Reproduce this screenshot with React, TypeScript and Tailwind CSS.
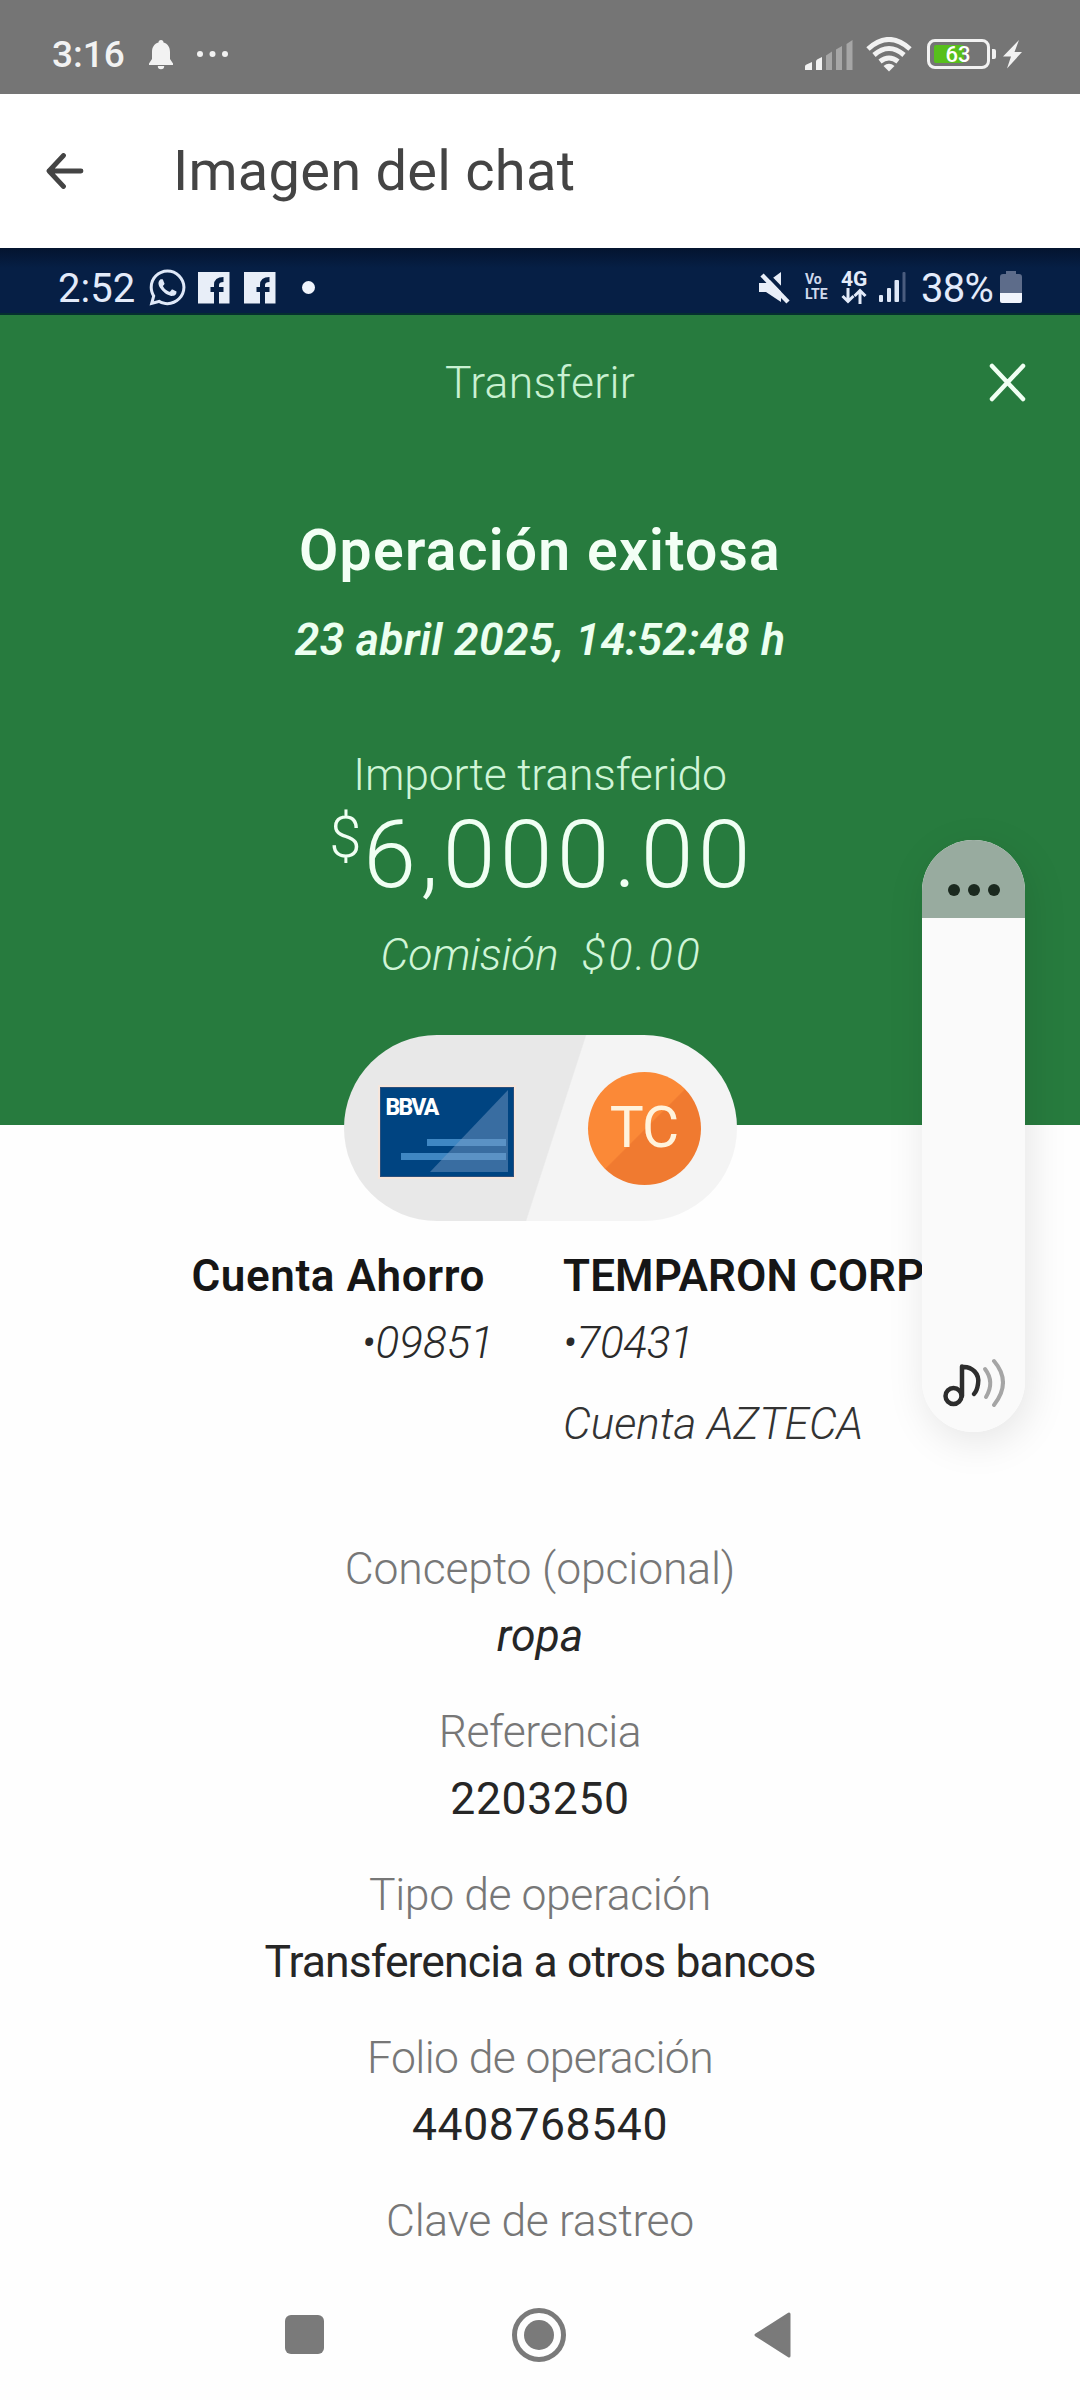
import React from "react";
import { FaWhatsapp } from "react-icons/fa";

const details = [
  { label: "Concepto (opcional)", value: "ropa", labelClass: "tracking-[-0.150px]", valueClass: "italic" },
  { label: "Referencia", value: "2203250", labelClass: "tracking-[-0.500px]", valueClass: "tracking-[0.600px]" },
  { label: "Tipo de operación", value: "Transferencia a otros bancos", labelClass: "tracking-[-0.400px]", valueClass: "tracking-[-0.900px]" },
  { label: "Folio de operación", value: "4408768540", labelClass: "tracking-[-0.600px]", valueClass: "tracking-[0.600px]" },
  { label: "Clave de rastreo", value: "", labelClass: "tracking-[-0.350px]", valueClass: "" },
];

const StatusBar = () => (
  <div className="h-[94px] bg-[#757575] flex items-start text-[#f2f2f2]">
    <span className="ml-[52px] mt-[34px] w-[75px] text-[37px] leading-[42px] font-medium">3:16</span>
    <svg className="ml-[21px] mt-[40px]" width="26" height="30" viewBox="0 0 26 30" fill="#f2f2f2">
      <path d="M13 0c1.600 0 2.500 1.100 2.500 2.600 4.300 1.200 6.500 4.700 6.500 9.400v7l3 4.500V25H1v-1.500L4 19v-7c0-4.700 2.200-8.200 6.500-9.400C10.500 1.100 11.400 0 13 0z" />
      <path d="M9.800 26h6.400a3.200 3.200 0 0 1-6.400 0z" />
    </svg>
    <svg className="ml-[23px] mt-[50px]" width="32" height="8" fill="#f2f2f2">
      <circle cx="3" cy="4" r="3" />
      <circle cx="15.500" cy="4" r="3" />
      <circle cx="28" cy="4" r="3" />
    </svg>
    <svg className="ml-[576px] mt-[40px]" width="49" height="32" fill="#f2f2f2">
      <path d="M0 26.500 Q0 25 1.500 24.500 L7 22 V30 H0z" />
      <path d="M11 21.500 Q11 20 12.500 19.300 L17 17 V30 H11z" />
      <g fill="#a6a6a6">
        <path d="M21 15.500 L27 11.500 V30 H21z" />
        <path d="M31 9.500 L37 6 V30 H31z" />
        <path d="M41.500 4 L47.500 0 V30 H41.500z" />
      </g>
    </svg>
    <svg className="ml-[12px] mt-[37px]" width="46" height="36" fill="none" stroke="#f2f2f2" strokeWidth="5">
      <path d="M2 12 Q23 -7 44 12" />
      <path d="M8 18 Q23 5 38 18" />
      <path d="M14 24.500 Q23 17.500 32 24.500" />
      <path d="M17.500 29 Q23 24.500 28.500 29 L23 34.500z" fill="#f2f2f2" stroke="none" />
    </svg>
    <div className="ml-[15px] mt-[39px] w-[63px] h-[30px] rounded-[8px] border-3 border-[#f2f2f2] relative">
      <div className="ml-[4px] mt-[3px] w-[30px] h-[18px] rounded-[2px] bg-[#57bf1c]" />
      <span className="absolute left-0 top-0 w-[56px] text-center text-[22px] leading-[26px] font-medium text-white">63</span>
    </div>
    <div className="ml-[2px] mt-[49px] w-[4px] h-[10px] rounded-r-[2px] bg-[#f2f2f2]" />
    <svg className="ml-[7px] mt-[40px]" width="19" height="29" fill="#f2f2f2">
      <path d="M16 0 L0 16.500 H8 L4 28.500 L19 12 H11.500z" />
    </svg>
  </div>
);

const AppBar = () => (
  <div className="h-[154px] bg-white flex items-center">
    <svg className="ml-[46px]" width="38" height="36" fill="none" stroke="#444" strokeWidth="4.800" strokeLinecap="round" strokeLinejoin="round">
      <path d="M17.500 2.500 L3 18 L17.500 33.500 M3 18 H35" />
    </svg>
    <h1 className="ml-[89px] text-[56px] leading-[64px] tracking-[0.250px] text-[#444]">Imagen del chat</h1>
  </div>
);

const FacebookIcon = () => (
  <svg width="32" height="32" fill="none">
    <rect width="31.500" height="31.500" fill="#e8eef8" />
    <path d="M18.500 32 V13 Q18.500 7.500 25.500 7.500 M12.500 17.500 H25.500" stroke="#061f45" strokeWidth="5" />
  </svg>
);

const InnerStatusBar = () => (
  <div className="h-[67px] border-b-2 border-[#04302f] bg-[#061f45] bg-[linear-gradient(#04142f,#061f45_20px)] flex items-start text-[#e3ebfa]">
    <span className="ml-[58px] mt-[18px] w-[78px] text-[40px] leading-[46px]">2:52</span>
    <FaWhatsapp className="ml-[11px] mt-[19px]" size={41} color="#dfe8f8" />
    <div className="ml-[10px] mt-[24px] flex gap-[14px]">
      <FacebookIcon />
      <FacebookIcon />
    </div>
    <div className="ml-[26px] mt-[33px] size-[13px] rounded-full bg-[#f0f4fc]" />
    <svg className="ml-[444px] mt-[24px]" width="32" height="32">
      <path d="M0 11 H7 L22 0 V30 L7 20 H0z" fill="#e8eef8" />
      <path d="M3 -3 L33 28" stroke="#061f45" strokeWidth="4" />
      <path d="M3 3 L29 30" stroke="#e8eef8" strokeWidth="4.500" />
    </svg>
    <div className="ml-[14px] mt-[24px] w-[28px] text-[14px] leading-[15px] font-bold text-[#cfd9ec]">
      <p>Vo</p>
      <p>LTE</p>
    </div>
    <div className="ml-[8px] mt-[22px] w-[28px]">
      <p className="text-[21px] leading-[18px] font-bold">4G</p>
      <svg width="26" height="16" fill="none" stroke="#e3ebfa" strokeWidth="3">
        <path d="M7 0 V13 M1.500 8 L7 13.500 L12.500 8 M19 16 V3 M13.500 8 L19 2.500 L24.500 8" />
      </svg>
    </div>
    <svg className="ml-[10px] mt-[24px]" width="28" height="31" fill="#dfe8f8">
      <rect x="0" y="23" width="4" height="7" rx="1" />
      <rect x="8" y="16" width="4" height="14" rx="1" />
      <rect x="15.500" y="8" width="4.500" height="22" rx="1" />
      <rect x="23.500" y="0" width="3" height="30" rx="1" fill="#4a5c7e" />
    </svg>
    <span className="ml-[14px] mt-[18px] w-[74px] text-[40px] leading-[46px] tracking-[-0.700px]">38%</span>
    <svg className="ml-[5px] mt-[23px]" width="22" height="33">
      <path d="M6 0 H16 V3 H19 Q22 3 22 6 V22 H0 V6 Q0 3 3 3 H6z" fill="#5d6c8a" />
      <path d="M0 22 H22 V30 Q22 32 20 32 H2 Q0 32 0 30z" fill="#f0f4fc" />
    </svg>
  </div>
);

const Summary = () => (
  <div className="h-[810px] bg-[#277b3e] flex flex-col items-center text-[44.500px] leading-[60px] whitespace-nowrap">
    <div className="w-full pt-[38px] grid grid-cols-[1fr_auto_1fr]">
      <span className="col-start-2 font-[360] tracking-[0.300px] text-[#c9f1d2]">Transferir</span>
      <svg className="justify-self-end mr-[54px] mt-[10px]" width="37" height="40" stroke="#f0fff3" strokeWidth="4.500" strokeLinecap="round">
        <path d="M3 3 L34 36 M34 3 L3 36" />
      </svg>
    </div>
    <h2 className="mt-[103px] text-[57px] leading-[70px] font-semibold tracking-[1.300px] text-[#f3fff5]">Operación exitosa</h2>
    <p className="mt-[24px] font-semibold italic tracking-[0.300px] text-[#ecfff0]">23 abril 2025, 14:52:48 h</p>
    <p className="mt-[75px] font-[360] tracking-[-0.150px] text-[#d0f5d8]">Importe transferido</p>
    <p className="mt-[5px] flex text-[95px] leading-[90px] font-[330] text-[#f0fff3]">
      <span className="mr-[2px] text-[58px] leading-[54px]">$</span>
      <span className="-mr-[4px] tracking-[4.300px]">6,000.00</span>
    </p>
    <p className="mt-[25px] flex gap-[23px] font-[360] italic text-[#d0f5d8]">
      <span className="tracking-[-0.200px]">Comisión</span>
      <span className="-mr-[3px] tracking-[3px]">$0.00</span>
    </p>
  </div>
);

const AccountsPill = () => (
  <div className="-mt-[90px] mx-auto w-[393px] h-[186px] rounded-full bg-[linear-gradient(107.900deg,#e8e8e8_53.300%,#f4f4f4_53.600%)] flex items-center">
    <div className="ml-[36px] mt-[7px] w-[134px] h-[90px] border border-[#2b4f7c] bg-[#004481] outline-2 outline-[#f6e6dc] relative overflow-hidden">
      <span className="absolute left-[5px] top-[8px] text-[23px] leading-[24px] font-extrabold tracking-[-1.800px] text-white">BBVA</span>
      <svg className="absolute left-0 top-0" width="132" height="88">
        <rect x="46" y="51" width="79" height="7" fill="#3f87c3" />
        <rect x="20" y="65" width="105" height="7" fill="#3f87c3" />
        <path d="M127 2 V84 H49z" fill="#7fa0c8" fillOpacity="0.450" />
      </svg>
    </div>
    <div className="ml-[74px] size-[113px] rounded-full bg-[linear-gradient(135deg,#fb8937_50%,#f07a30_51%)] flex items-center justify-center">
      <span className="text-[57px] leading-[60px] font-[370] tracking-[-1px] text-[#fff3dc]">TC</span>
    </div>
  </div>
);

const Accounts = () => (
  <div className="mt-[25px] flex text-[44px] leading-[60px] whitespace-nowrap">
    <div className="w-[494px] text-right">
      <p className="mr-[9px] font-semibold tracking-[0.600px] text-[#161616]">Cuenta Ahorro</p>
      <p className="mt-[7px] font-[350] italic text-[#2a2a2a]">•09851</p>
    </div>
    <div className="ml-[69px]">
      <p className="font-semibold tracking-[0.100px] text-[#161616]">TEMPARON CORP</p>
      <p className="mt-[7px] font-[350] italic tracking-[-0.300px] text-[#2a2a2a]">•70431</p>
      <p className="mt-[21px] font-[350] italic text-[#333]">Cuenta AZTECA</p>
    </div>
  </div>
);

const Details = () => (
  <div className="mt-[85px] h-[731px] overflow-hidden flex flex-col gap-[36px] text-center text-[44.500px] leading-[60px]">
    {details.map((item) => (
      <div key={item.label} className="shrink-0">
        <p className={`font-[360] text-[#777] ${item.labelClass}`}>{item.label}</p>
        <p className={`mt-[7px] font-[380] text-[#262626] ${item.valueClass}`}>{item.value}</p>
      </div>
    ))}
  </div>
);

const VolumePanel = () => (
  <div className="absolute left-[922px] top-[840px] w-[103px] h-[592px] rounded-[51px] overflow-hidden bg-[#fafafa] flex flex-col justify-between">
    <div className="h-[78px] bg-[#98ab9f] flex items-start justify-center gap-[8px] pt-[44px]">
      <div className="size-[12px] rounded-full bg-[#1c2a20]" />
      <div className="size-[12px] rounded-full bg-[#1c2a20]" />
      <div className="size-[12px] rounded-full bg-[#1c2a20]" />
    </div>
    <svg className="ml-[21px] mb-[22px]" width="64" height="54" fill="none" strokeLinecap="round">
      <g stroke="#2d2d2d" strokeWidth="4.500">
        <ellipse cx="10.500" cy="40" rx="8" ry="8" />
        <path d="M19 40 V10.500 M19 11 C29 10 37 18 35 28 Q34 35 31 38" />
      </g>
      <g stroke="#a5a5a5" strokeWidth="4">
        <path d="M42 13 Q52 26 43 41" />
        <path d="M51 5 Q69 26 51 49" />
      </g>
    </svg>
  </div>
);

const NavBar = () => (
  <div className="h-[130px] bg-[#fefefe] flex items-start">
    <div className="ml-[285px] mt-[45px] size-[39px] rounded-[6px] bg-[#7a7a7a]" />
    <div className="ml-[188px] mt-[38px] size-[54px] rounded-full border-[5px] border-[#7a7a7a] flex items-center justify-center">
      <div className="size-[30px] rounded-full bg-[#7a7a7a]" />
    </div>
    <svg className="ml-[188px] mt-[42px]" width="38" height="46">
      <path d="M2 23 L35 2 V44z" fill="#7a7a7a" stroke="#7a7a7a" strokeWidth="3" strokeLinejoin="round" />
    </svg>
  </div>
);

const App = () => {
  return (
    <div className="relative w-[1080px] h-[2400px] overflow-hidden bg-[#fefefe] font-['Roboto',sans-serif]">
      <StatusBar />
      <AppBar />
      <InnerStatusBar />
      <Summary />
      <AccountsPill />
      <Accounts />
      <Details />
      <NavBar />
      <div className="absolute left-[922px] top-[840px] w-[103px] h-[592px] rounded-[51px] shadow-[4px_10px_40px_rgba(0,0,0,0.100)]" />
      <VolumePanel />
    </div>
  );
};

export default App;
